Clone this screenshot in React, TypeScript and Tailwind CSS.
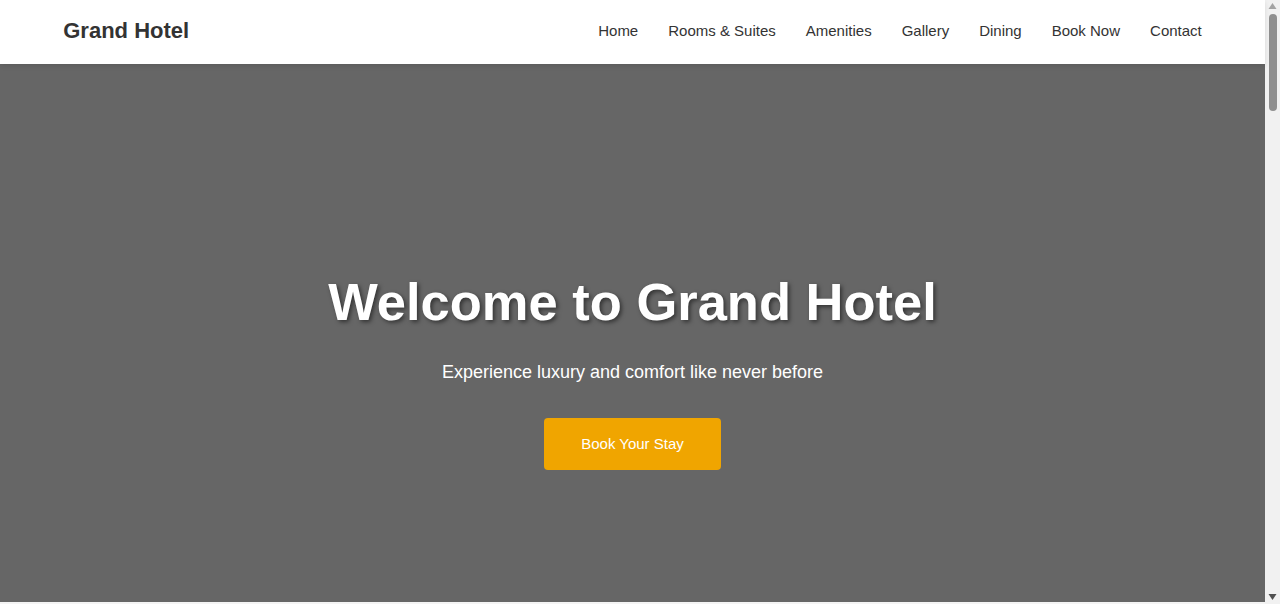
import React from "react";

const links = ["Home", "Rooms & Suites", "Amenities", "Gallery", "Dining", "Book Now", "Contact"];

function ScrollbarStrip() {
  return (
    <div className="w-[15px] h-[604px] shrink-0 bg-[#f1f1f1] flex flex-col items-center">
      <svg width="15" height="14" viewBox="0 0 15 14" className="shrink-0">
        <polygon points="7.5,3 11.5,9 3.5,9" fill="#a3a3a3" />
      </svg>
      <div className="w-[8px] h-[97px] rounded-full bg-[#8f8f8f]" />
      <div className="flex-1" />
      <svg width="15" height="14" viewBox="0 0 15 14" className="shrink-0">
        <polygon points="3.5,4 11.5,4 7.5,10" fill="#505050" />
      </svg>
    </div>
  );
}

export default function App() {
  return (
    <div className="h-[604px] overflow-hidden flex bg-[#f4f4f4] text-[#333] font-['Liberation_Sans',Arial,sans-serif]">
      <div className="flex-1 min-w-0 flex flex-col">
        <header className="relative z-10 h-16 shrink-0 bg-white flex items-center justify-between px-[5%] pb-[2px] shadow-[0_2px_5px_rgba(0,0,0,0.1)]">
          <div className="text-[22px] font-bold text-[#333] leading-none">Grand Hotel</div>
          <nav className="flex items-center gap-[30px] mb-[2px]">
            {links.map((l) => (
              <a key={l} href="#" className="text-[15px] text-[#333] leading-none">
                {l}
              </a>
            ))}
          </nav>
        </header>
        <section className="h-[538px] shrink-0 bg-[#666] flex flex-col items-center pt-[208px] text-white text-center">
          <h1 className="text-[52.5px] font-bold leading-[60px] [text-shadow:2px_2px_4px_rgba(0,0,0,0.5)]">
            Welcome to Grand Hotel
          </h1>
          <p className="mt-[30px] text-[18px] leading-[21px]">Experience luxury and comfort like never before</p>
          <a
            href="#"
            className="mt-[35px] inline-flex items-center justify-center w-[177px] h-[52px] rounded-[4px] bg-[#f0a500] text-white text-[15px]"
          >
            Book Your Stay
          </a>
        </section>
        <div className="flex-1 bg-[#f4f4f4]" />
      </div>
      <ScrollbarStrip />
    </div>
  );
}
